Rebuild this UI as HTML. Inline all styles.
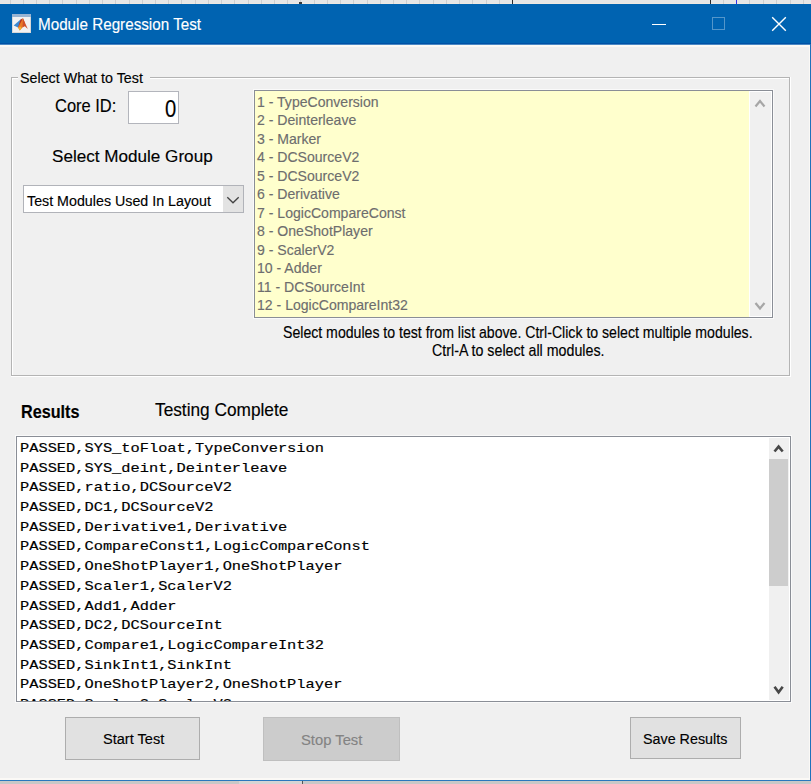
<!DOCTYPE html>
<html><head><meta charset="utf-8">
<title>Module Regression Test</title>
<style>
*{margin:0;padding:0;box-sizing:border-box}
html,body{width:811px;height:784px;overflow:hidden;background:#f0f0f0}
body{position:relative;font-family:"Liberation Sans",sans-serif;color:#000}
.a{position:absolute}
.t{position:absolute;white-space:pre;line-height:1;transform-origin:0 0;-webkit-text-stroke:0.15px currentColor}
.g{position:absolute;top:0;width:1px;height:4px;background:#cfcfcf}
</style></head><body>
<div class="a" style="left:0;top:0;width:811px;height:3px;background:#e6e6e6"></div>
<div class="a" style="left:0;top:3px;width:811px;height:1px;background:#eee8e2"></div>
<div class="g" style="left:10px"></div><div class="g" style="left:23px"></div><div class="g" style="left:36px"></div><div class="g" style="left:49px"></div><div class="g" style="left:62px"></div><div class="g" style="left:76px"></div><div class="g" style="left:89px"></div><div class="g" style="left:102px"></div><div class="g" style="left:115px"></div><div class="g" style="left:129px"></div><div class="g" style="left:142px"></div><div class="g" style="left:155px"></div><div class="g" style="left:168px"></div><div class="g" style="left:181px"></div><div class="g" style="left:195px"></div><div class="g" style="left:208px"></div><div class="g" style="left:221px"></div><div class="g" style="left:234px"></div><div class="g" style="left:248px"></div><div class="g" style="left:261px"></div><div class="g" style="left:274px"></div><div class="g" style="left:287px"></div><div class="g" style="left:300px"></div><div class="g" style="left:314px"></div><div class="g" style="left:327px"></div><div class="g" style="left:340px"></div><div class="g" style="left:353px"></div><div class="g" style="left:367px"></div><div class="g" style="left:380px"></div><div class="g" style="left:393px"></div><div class="g" style="left:406px"></div><div class="g" style="left:419px"></div><div class="g" style="left:433px"></div><div class="g" style="left:446px"></div><div class="g" style="left:459px"></div><div class="g" style="left:472px"></div><div class="g" style="left:486px"></div><div class="g" style="left:499px"></div><div class="g" style="left:512px;background:#2a2a2a"></div><div class="a" style="left:299px;top:2px;width:3px;height:2px;background:#3a3a3a"></div><div class="g" style="left:723px"></div><div class="g" style="left:749px"></div><div class="g" style="left:763px"></div><div class="g" style="left:776px"></div><div class="g" style="left:790px"></div><div class="g" style="left:803px"></div><div class="g" style="left:710px;background:#2a2a2a"></div><div class="g" style="left:736px;background:#3434e8"></div>
<div class="a" style="left:0;top:4px;width:811px;height:41px;background:#0063b1"></div>
<div class="a" style="left:0;top:43px;width:811px;height:1px;background:#0052a6"></div>
<div class="a" style="left:0;top:44px;width:811px;height:1px;background:#4a88c4"></div>
<div class="a" style="left:0;top:45px;width:811px;height:2px;background:#fbf9f6"></div>
<div class="a" style="left:12px;top:14px;width:19px;height:19px;background:#f2f2f2;border:1px solid #d8d8d8"></div>
<div class="a" style="left:12px;top:14px;width:19px;height:3px;background:#98b4d2"></div>
<svg class="a" style="left:0;top:0" width="40" height="40" viewBox="0 0 40 40">
<path d="M13.7 25.5 L20.5 19.6 L21.8 22.5 L18 27.6 Z" fill="#3b8ad2"/>
<path d="M20.5 19.6 L23 18.3 L20.5 26 L18 27.6 Z" fill="#b8321e"/>
<path d="M23 18.3 L25 23 L22.5 27.5 L19.8 30.6 L18 27.6 Z" fill="#e87a26"/>
<path d="M23 18.3 L27.8 29 L24.8 26.3 L22.5 27.5 Z" fill="#d0502a"/>
<path d="M18.5 28 L20.5 26.5 L21.5 28 L19.8 30.6 Z" fill="#f4b52e"/>
</svg>
<div class="t" style="left:38.0px;top:16.39px;font-size:17px;color:#fff;transform:scaleX(0.8956);">Module Regression Test</div>
<div class="a" style="left:652px;top:24px;width:14px;height:1px;background:#fff"></div>
<div class="a" style="left:712px;top:17px;width:13px;height:13px;border:1px solid rgba(255,255,255,0.33)"></div>
<svg class="a" style="left:771px;top:16px" width="16" height="16" viewBox="0 0 16 16"><path d="M1.2 1.2 L14.8 14.8 M14.8 1.2 L1.2 14.8" stroke="#fff" stroke-width="1.4"/></svg>
<div class="a" style="left:11px;top:77px;width:779px;height:299px;border:1px solid #b4b4b4"></div>
<div class="a" style="left:12px;top:78px;width:777px;height:297px;border-left:1px solid #fff;border-top:1px solid #fff"></div>
<div class="a" style="left:790px;top:77px;width:1px;height:300px;background:#fff"></div>
<div class="a" style="left:11px;top:376px;width:780px;height:1px;background:#fff"></div>
<div class="a" style="left:18px;top:70px;width:132px;height:14px;background:#f0f0f0"></div>
<div class="t" style="left:20.0px;top:70.5px;font-size:14.6px;transform:scaleX(0.9793);">Select What to Test</div>
<div class="t" style="left:54.5px;top:97.28px;font-size:18.6px;transform:scaleX(0.8854);">Core ID:</div>
<div class="a" style="left:128px;top:91px;width:51px;height:33px;background:#fff;border:1px solid #b3b5bc"></div>
<div class="t" style="left:164.5px;top:97.81px;font-size:23px;transform:scaleX(0.8773);">0</div>
<div class="t" style="left:52.0px;top:147.86px;font-size:17.2px;transform:scaleX(0.995);">Select Module Group</div>
<div class="a" style="left:23px;top:185px;width:221px;height:28px;background:#fff;border:1px solid #b1b3b9"></div>
<div class="a" style="left:223px;top:186px;width:20px;height:26px;background:#e3e3e3"></div>
<svg class="a" style="left:226px;top:195px" width="14" height="10" viewBox="0 0 14 10"><path d="M1.3 2.2 L7 7.8 L12.7 2.2" stroke="#444" stroke-width="1.3" fill="none"/></svg>
<div class="t" style="left:26.5px;top:192.7px;font-size:15.4px;transform:scaleX(0.9266);">Test Modules Used In Layout</div>
<div class="a" style="left:254px;top:90px;width:519px;height:228px;background:#ffffcd;border:1px solid #8a8e96;box-shadow:0 0 0 1px #fafafa"></div>
<div class="a" style="left:749px;top:91px;width:23px;height:226px;background:#f0f0f0;border:1px solid #fff"></div>
<svg class="a" style="left:752px;top:96.5px" width="16" height="14" viewBox="0 0 16 14"><path d="M3.5 9.5 L8 4 L12.5 9.5" stroke="#a6a6a6" stroke-width="2.2" fill="none"/></svg>
<svg class="a" style="left:752px;top:299px" width="16" height="14" viewBox="0 0 16 14"><path d="M3.5 4 L8 9.5 L12.5 4" stroke="#a6a6a6" stroke-width="2.2" fill="none"/></svg>
<div class="t" style="left:256.5px;top:94.90px;font-size:14.8px;color:#6d6d6d;transform:scaleX(0.95)">1 - TypeConversion</div>
<div class="t" style="left:256.5px;top:113.38px;font-size:14.8px;color:#6d6d6d;transform:scaleX(0.95)">2 - Deinterleave</div>
<div class="t" style="left:256.5px;top:131.86px;font-size:14.8px;color:#6d6d6d;transform:scaleX(0.95)">3 - Marker</div>
<div class="t" style="left:256.5px;top:150.34px;font-size:14.8px;color:#6d6d6d;transform:scaleX(0.95)">4 - DCSourceV2</div>
<div class="t" style="left:256.5px;top:168.82px;font-size:14.8px;color:#6d6d6d;transform:scaleX(0.95)">5 - DCSourceV2</div>
<div class="t" style="left:256.5px;top:187.30px;font-size:14.8px;color:#6d6d6d;transform:scaleX(0.95)">6 - Derivative</div>
<div class="t" style="left:256.5px;top:205.78px;font-size:14.8px;color:#6d6d6d;transform:scaleX(0.95)">7 - LogicCompareConst</div>
<div class="t" style="left:256.5px;top:224.26px;font-size:14.8px;color:#6d6d6d;transform:scaleX(0.95)">8 - OneShotPlayer</div>
<div class="t" style="left:256.5px;top:242.74px;font-size:14.8px;color:#6d6d6d;transform:scaleX(0.95)">9 - ScalerV2</div>
<div class="t" style="left:256.5px;top:261.22px;font-size:14.8px;color:#6d6d6d;transform:scaleX(0.95)">10 - Adder</div>
<div class="t" style="left:256.5px;top:279.70px;font-size:14.8px;color:#6d6d6d;transform:scaleX(0.95)">11 - DCSourceInt</div>
<div class="t" style="left:256.5px;top:298.18px;font-size:14.8px;color:#6d6d6d;transform:scaleX(0.95)">12 - LogicCompareInt32</div>
<div class="t" style="left:283.0px;top:325.36px;font-size:15.7px;transform:scaleX(0.8992);">Select modules to test from list above. Ctrl-Click to select multiple modules.</div>
<div class="t" style="left:431.5px;top:343.26px;font-size:15.7px;transform:scaleX(0.9074);">Ctrl-A to select all modules.</div>
<div class="t" style="left:20.5px;top:403.13px;font-size:18.2px;font-weight:700;transform:scaleX(0.8894);">Results</div>
<div class="t" style="left:154.5px;top:400.93px;font-size:18.2px;transform:scaleX(0.949);">Testing Complete</div>
<div class="a" style="left:16px;top:436px;width:775px;height:266px;background:#fff;border:1px solid #8a8e96;box-shadow:0 0 0 1px #fafafa"></div>
<div class="a" style="left:769px;top:437px;width:21px;height:264px;background:#f0f0f0;border-top:1px solid #fff;border-right:1px solid #fff;border-bottom:1px solid #fff"></div>
<div class="a" style="left:769px;top:459px;width:19px;height:127px;background:#cdcdcd"></div>
<svg class="a" style="left:771px;top:441px" width="16" height="14" viewBox="0 0 16 14"><path d="M3.5 10.5 L7.6 5.6 L11.7 10.5" stroke="#474747" stroke-width="2.6" fill="none"/></svg>
<svg class="a" style="left:771px;top:684px" width="16" height="14" viewBox="0 0 16 14"><path d="M3.5 2.7 L7.6 8.3 L11.7 2.7" stroke="#474747" stroke-width="2.6" fill="none"/></svg>
<div class="a" style="left:17px;top:437px;width:751px;height:264px;overflow:hidden">
<div class="t" style="left:2.5px;top:5.85px;font-family:'Liberation Mono',monospace;font-size:15.5px;transform:scale(0.9902,0.86);-webkit-text-stroke:0.2px #000">PASSED,SYS_toFloat,TypeConversion</div>
<div class="t" style="left:2.5px;top:25.57px;font-family:'Liberation Mono',monospace;font-size:15.5px;transform:scale(0.9902,0.86);-webkit-text-stroke:0.2px #000">PASSED,SYS_deint,Deinterleave</div>
<div class="t" style="left:2.5px;top:45.29px;font-family:'Liberation Mono',monospace;font-size:15.5px;transform:scale(0.9902,0.86);-webkit-text-stroke:0.2px #000">PASSED,ratio,DCSourceV2</div>
<div class="t" style="left:2.5px;top:65.01px;font-family:'Liberation Mono',monospace;font-size:15.5px;transform:scale(0.9902,0.86);-webkit-text-stroke:0.2px #000">PASSED,DC1,DCSourceV2</div>
<div class="t" style="left:2.5px;top:84.73px;font-family:'Liberation Mono',monospace;font-size:15.5px;transform:scale(0.9902,0.86);-webkit-text-stroke:0.2px #000">PASSED,Derivative1,Derivative</div>
<div class="t" style="left:2.5px;top:104.45px;font-family:'Liberation Mono',monospace;font-size:15.5px;transform:scale(0.9902,0.86);-webkit-text-stroke:0.2px #000">PASSED,CompareConst1,LogicCompareConst</div>
<div class="t" style="left:2.5px;top:124.17px;font-family:'Liberation Mono',monospace;font-size:15.5px;transform:scale(0.9902,0.86);-webkit-text-stroke:0.2px #000">PASSED,OneShotPlayer1,OneShotPlayer</div>
<div class="t" style="left:2.5px;top:143.89px;font-family:'Liberation Mono',monospace;font-size:15.5px;transform:scale(0.9902,0.86);-webkit-text-stroke:0.2px #000">PASSED,Scaler1,ScalerV2</div>
<div class="t" style="left:2.5px;top:163.61px;font-family:'Liberation Mono',monospace;font-size:15.5px;transform:scale(0.9902,0.86);-webkit-text-stroke:0.2px #000">PASSED,Add1,Adder</div>
<div class="t" style="left:2.5px;top:183.33px;font-family:'Liberation Mono',monospace;font-size:15.5px;transform:scale(0.9902,0.86);-webkit-text-stroke:0.2px #000">PASSED,DC2,DCSourceInt</div>
<div class="t" style="left:2.5px;top:203.05px;font-family:'Liberation Mono',monospace;font-size:15.5px;transform:scale(0.9902,0.86);-webkit-text-stroke:0.2px #000">PASSED,Compare1,LogicCompareInt32</div>
<div class="t" style="left:2.5px;top:222.77px;font-family:'Liberation Mono',monospace;font-size:15.5px;transform:scale(0.9902,0.86);-webkit-text-stroke:0.2px #000">PASSED,SinkInt1,SinkInt</div>
<div class="t" style="left:2.5px;top:242.49px;font-family:'Liberation Mono',monospace;font-size:15.5px;transform:scale(0.9902,0.86);-webkit-text-stroke:0.2px #000">PASSED,OneShotPlayer2,OneShotPlayer</div>
<div class="t" style="left:2.5px;top:262.21px;font-family:'Liberation Mono',monospace;font-size:15.5px;transform:scale(0.9902,0.86);-webkit-text-stroke:0.2px #000">PASSED,Scaler2,ScalerV2</div>
</div>
<div class="a" style="left:65px;top:717px;width:135px;height:43px;background:#e1e1e1;border:1px solid #adadad"></div>
<div class="t" style="left:102.5px;top:731.08px;font-size:15.5px;transform:scaleX(0.9395);">Start Test</div>
<div class="a" style="left:263px;top:717px;width:137px;height:44px;background:#cccccc;border:1px solid #bfbfbf"></div>
<div class="t" style="left:301.0px;top:732.19px;font-size:15.5px;color:#838383;transform:scaleX(0.9534);">Stop Test</div>
<div class="a" style="left:630px;top:717px;width:111px;height:42px;background:#e1e1e1;border:1px solid #adadad"></div>
<div class="t" style="left:643.0px;top:730.58px;font-size:15.5px;transform:scaleX(0.9231);">Save Results</div>
<div class="a" style="left:809px;top:47px;width:1px;height:732px;background:#fbf9f6"></div>
<div class="a" style="left:810px;top:44px;width:1px;height:737px;background:#1f72bb"></div>
<div class="a" style="left:0;top:778px;width:810px;height:2px;background:#fbf9f6"></div>
<div class="a" style="left:0;top:780px;width:811px;height:1px;background:#2a78bd"></div>
<div class="a" style="left:0;top:781px;width:811px;height:3px;background:#c9c8c7"></div>
<div class="a" style="left:239px;top:781px;width:63px;height:3px;background:#d6d5d4"></div><div class="a" style="left:302px;top:781px;width:1px;height:3px;background:#555"></div>
</body></html>
